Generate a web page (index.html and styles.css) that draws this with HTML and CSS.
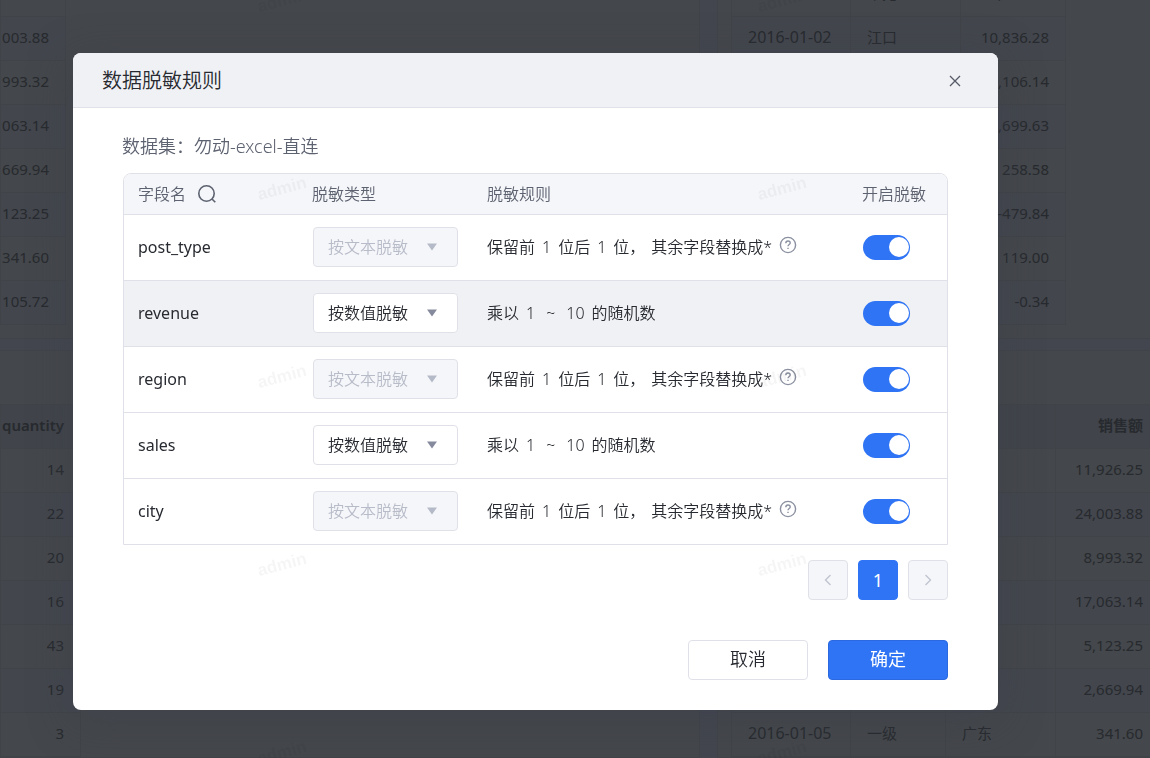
FILE: index.html
```html
<!DOCTYPE html>
<html lang="zh-CN">
<head>
<meta charset="utf-8">
<title>数据脱敏规则</title>
<link rel="stylesheet" href="styles.css">
</head>
<body>
<svg class="sprite" aria-hidden="true">
  <symbol id="help" viewBox="0 0 18 18"><circle cx="9" cy="9" r="7.6" fill="none" stroke="currentColor" stroke-width="1.4"/><path d="M6.8 7.200c0-1.300 1-2.200 2.200-2.200s2.200.8 2.200 2c0 1.500-2.200 1.600-2.200 3.300M9 11.800v1.300" fill="none" stroke="currentColor" stroke-width="1.4"/></symbol>
  <symbol id="caret" viewBox="0 0 10 8"><path d="M0 .5h10L5 7.500z" fill="currentColor"/></symbol>
</svg>

<main class="dashboard">
  <section class="panel panel-top">
    <table class="grid grid-edge">
      <tbody>
        <tr><td></td></tr>
        <tr><td>003.88</td></tr>
        <tr><td>993.32</td></tr>
        <tr><td>063.14</td></tr>
        <tr><td>669.94</td></tr>
        <tr><td>123.25</td></tr>
        <tr><td>341.60</td></tr>
        <tr><td>105.72</td></tr>
      </tbody>
    </table>
  </section>
  <section class="panel panel-top panel-right">
    <table class="grid grid-upper">
      <colgroup><col class="c-date"><col class="c-city"><col></colgroup>
      <tbody>
        <tr><td></td><td class="txt">常宛</td><td>,836.28</td></tr>
        <tr><td class="date">2016-01-02</td><td class="txt">江口</td><td>10,836.28</td></tr>
        <tr><td></td><td></td><td>,106.14</td></tr>
        <tr><td></td><td></td><td>,699.63</td></tr>
        <tr><td></td><td></td><td>258.58</td></tr>
        <tr><td></td><td></td><td>-479.84</td></tr>
        <tr><td></td><td></td><td>119.00</td></tr>
        <tr><td></td><td></td><td>-0.34</td></tr>
      </tbody>
    </table>
  </section>
  <section class="panel panel-bottom">
    <table class="grid grid-quantity">
      <thead><tr><th>quantity</th></tr></thead>
      <tbody>
        <tr><td>14</td></tr>
        <tr><td>22</td></tr>
        <tr><td>20</td></tr>
        <tr><td>16</td></tr>
        <tr><td>43</td></tr>
        <tr><td>19</td></tr>
        <tr><td>3</td></tr>
      </tbody>
    </table>
  </section>
  <section class="panel panel-bottom panel-right">
    <table class="grid grid-sales">
      <colgroup><col class="c-date"><col class="c-level"><col class="c-area"><col></colgroup>
      <thead><tr><th></th><th></th><th></th><th>销售额</th></tr></thead>
      <tbody>
        <tr><td></td><td></td><td></td><td>11,926.25</td></tr>
        <tr><td></td><td></td><td></td><td>24,003.88</td></tr>
        <tr><td></td><td></td><td></td><td>8,993.32</td></tr>
        <tr><td></td><td></td><td></td><td>17,063.14</td></tr>
        <tr><td></td><td></td><td></td><td>5,123.25</td></tr>
        <tr><td></td><td></td><td></td><td>2,669.94</td></tr>
        <tr><td class="date">2016-01-05</td><td class="txt">一级</td><td class="txt">广东</td><td>341.60</td></tr>
      </tbody>
    </table>
  </section>
</main>

<div class="overlay">
  <div class="dialog" role="dialog" aria-modal="true" aria-labelledby="dialog-title">
    <header class="dialog-header">
      <h1 class="dialog-title" id="dialog-title">数据脱敏规则</h1>
      <button class="close" type="button" aria-label="关闭"><svg width="12" height="12" viewBox="0 0 12 12"><path d="M1 1l10 10M11 1L1 11" stroke="currentColor" stroke-width="1.3"/></svg></button>
    </header>
    <div class="dialog-body">
      <p class="dataset">数据集：勿动-excel-直连</p>
      <div class="rules-frame">
        <table class="rules">
          <colgroup><col class="r-name"><col class="r-type"><col><col class="r-switch"></colgroup>
          <thead>
            <tr>
              <th><div class="name-head">字段名 <button class="search" type="button" aria-label="搜索"><svg width="20" height="20" viewBox="0 0 20 20" fill="none" stroke="currentColor" stroke-width="1.6"><circle cx="9.500" cy="9.500" r="7.700"/><path d="M15 15l3.300 3.300"/></svg></button></div></th>
              <th>脱敏类型</th><th>脱敏规则</th><th>开启脱敏</th>
            </tr>
          </thead>
          <tbody>
            <tr>
              <td>post_type</td>
              <td><div class="select"><select aria-label="post_type 脱敏类型" disabled><option>按文本脱敏</option></select><svg class="caret"><use href="#caret"/></svg></div></td>
              <td><div class="rule">保留前<span class="num">1</span>位后<span class="num">1</span>位，<span class="rest">其余字段替换成*</span><svg class="help"><use href="#help"/></svg></div></td>
              <td><input class="switch" type="checkbox" role="switch" aria-label="post_type 开启脱敏" checked></td>
            </tr>
            <tr class="active">
              <td>revenue</td>
              <td><div class="select"><select aria-label="revenue 脱敏类型"><option>按数值脱敏</option></select><svg class="caret"><use href="#caret"/></svg></div></td>
              <td><div class="rule">乘以<span class="num">1</span><span class="tilde">~</span><span class="num">10</span>的随机数</div></td>
              <td><input class="switch" type="checkbox" role="switch" aria-label="revenue 开启脱敏" checked></td>
            </tr>
            <tr>
              <td>region</td>
              <td><div class="select"><select aria-label="region 脱敏类型" disabled><option>按文本脱敏</option></select><svg class="caret"><use href="#caret"/></svg></div></td>
              <td><div class="rule">保留前<span class="num">1</span>位后<span class="num">1</span>位，<span class="rest">其余字段替换成*</span><svg class="help"><use href="#help"/></svg></div></td>
              <td><input class="switch" type="checkbox" role="switch" aria-label="region 开启脱敏" checked></td>
            </tr>
            <tr>
              <td>sales</td>
              <td><div class="select"><select aria-label="sales 脱敏类型"><option>按数值脱敏</option></select><svg class="caret"><use href="#caret"/></svg></div></td>
              <td><div class="rule">乘以<span class="num">1</span><span class="tilde">~</span><span class="num">10</span>的随机数</div></td>
              <td><input class="switch" type="checkbox" role="switch" aria-label="sales 开启脱敏" checked></td>
            </tr>
            <tr>
              <td>city</td>
              <td><div class="select"><select aria-label="city 脱敏类型" disabled><option>按文本脱敏</option></select><svg class="caret"><use href="#caret"/></svg></div></td>
              <td><div class="rule">保留前<span class="num">1</span>位后<span class="num">1</span>位，<span class="rest">其余字段替换成*</span><svg class="help"><use href="#help"/></svg></div></td>
              <td><input class="switch" type="checkbox" role="switch" aria-label="city 开启脱敏" checked></td>
            </tr>
          </tbody>
        </table>
      </div>
      <nav class="pager" aria-label="分页">
        <button class="page" type="button" aria-label="上一页" disabled><svg width="8" height="12" viewBox="0 0 8 12"><path d="M6.500 1L1.500 6l5 5" fill="none" stroke="currentColor" stroke-width="1.300"/></svg></button>
        <button class="page page-current" type="button" aria-current="page">1</button>
        <button class="page" type="button" aria-label="下一页" disabled><svg width="8" height="12" viewBox="0 0 8 12"><path d="M1.500 1l5 5-5 5" fill="none" stroke="currentColor" stroke-width="1.300"/></svg></button>
      </nav>
    </div>
    <footer class="dialog-footer">
      <button class="btn" type="button">取消</button>
      <button class="btn btn-primary" type="button">确定</button>
    </footer>
  </div>
</div>

<div class="watermarks" aria-hidden="true">
  <span>admin</span><span>admin</span>
  <span>admin</span><span>admin</span>
  <span>admin</span><span>admin</span>
  <span>admin</span><span>admin</span>
  <span>admin</span><span>admin</span>
</div>
</body>
</html>
```
FILE: styles.css
```css
* { box-sizing: border-box; }

body {
  margin: 0;
  height: 100vh;
  overflow: hidden;
  font: 16px/24px "Noto Sans", "Noto Sans CJK SC", sans-serif;
  color: #272a30;
  background: #44464a;
}

button, select {
  font: inherit;
  color: inherit;
  margin: 0;
  padding: 0;
}

.sprite { display: none; }

/* Dimmed dashboard */
.dashboard {
  display: grid;
  grid-template-columns: minmax(0, 699fr) minmax(0, 432fr);
  grid-template-rows: 338px 406px;
  gap: 13px 19px;
  height: 100%;
  background: #43464e;
  color: #272a2e;
}
.panel {
  background: #44474b;
  display: flex;
  flex-direction: column;
  overflow: hidden;
  box-shadow: 0 0 0 1px #404348;
}
.panel-top { justify-content: flex-end; padding-bottom: 13px; }
.panel-bottom { padding-top: 53px; }
.panel-right { padding-left: 13px; }
.grid {
  flex: none;
  border-collapse: collapse;
  table-layout: fixed;
  font-size: 15px;
  line-height: 24px;
}
.grid th, .grid td {
  height: 44px;
  padding: 0 16px 4px;
  border: 1px solid #404347;
  text-align: right;
  white-space: nowrap;
}
.grid th { background: #41444a; font-weight: 600; }
.grid-edge tr:nth-child(even) td,
.grid-upper tr:nth-child(even) td,
.panel-bottom tbody tr:nth-child(even) td { background: #43464d; }
.grid .txt { text-align: left; }
.grid .date { font-size: 16px; text-align: left; }
.grid-edge { width: 66px; }
.grid-edge td { padding-left: 0; }
.grid-quantity { width: 81px; }
.grid-quantity th { padding-left: 0; }
.grid-upper { width: 335px; }
.grid-sales { width: 429px; }
.c-date { width: 119px; }
.c-city { width: 110px; }
.c-level { width: 95px; }
.c-area { width: 110px; }

/* Dialog */
.overlay {
  position: fixed;
  inset: 0;
  padding: 53px 152px 48px 73px;
}
.dialog {
  display: flex;
  flex-direction: column;
  background: #fff;
  border-radius: 8px;
  overflow: hidden;
  box-shadow: 0 8px 40px rgba(60, 63, 75, .5);
}
.dialog-header {
  display: flex;
  align-items: center;
  justify-content: space-between;
  height: 55px;
  padding: 2px 32px 0 29px;
  background: #f0f1f5;
  border-bottom: 1px solid #e0e1e8;
}
.dialog-title { margin: 0; font-size: 20px; font-weight: 350; line-height: 28px; }
.close {
  display: grid;
  place-items: center;
  width: 22px;
  height: 22px;
  border: 0;
  background: none;
  color: #555a66;
}
.dialog-body { padding: 22px 50px 0 49px; }
.dataset {
  margin: 0 0 11px;
  font-size: 18px;
  line-height: 32px;
  color: #5d6270;
  font-weight: 350;
}
.rules-frame {
  margin-left: 1px;
  border: 1px solid #e0e1e8;
  border-radius: 8px 8px 0 0;
  overflow: hidden;
}
.rules {
  width: 100%;
  border-collapse: collapse;
  table-layout: fixed;
}
.rules th {
  height: 40px;
  padding: 0 0 0 14px;
  background: #f5f6f9;
  text-align: left;
  font-weight: 350;
  color: #5d6270;
}
.rules td { height: 66px; padding: 0 0 0 14px; border-top: 1px solid #e0e1e8; }
.active td { background: #f0f1f5; }
.r-name { width: 174px; }
.r-type { width: 175px; }
.r-switch { width: 99px; }
.name-head { display: flex; align-items: center; gap: 11px; }
.search { display: flex; border: 0; background: none; }

.select { position: relative; width: 145px; margin-left: 1px; }
.select select {
  display: block;
  width: 100%;
  height: 40px;
  padding: 0 14px;
  border: 1px solid #e0e1e8;
  border-radius: 4px;
  background: #fff;
  appearance: none;
  font-weight: 350;
  opacity: 1;
}
.select select:disabled { background: #f5f6f9; color: #b8bcc9; }
.caret {
  position: absolute;
  top: 16px;
  right: 21px;
  width: 10px;
  height: 8px;
  color: #858b9c;
  pointer-events: none;
}
.select select:disabled + .caret { color: #b5bac8; }

.rule { display: flex; align-items: center; font-weight: 350; white-space: nowrap; }
.num { margin: 0 7px; }
.tilde { margin: 0 4px; }
.rest { margin-left: 6px; }
.help { width: 18px; height: 18px; margin: 0 0 4px 7px; color: #8b91a0; }

.switch {
  appearance: none;
  display: flex;
  align-items: center;
  justify-content: flex-end;
  width: 47px;
  height: 25px;
  margin: 0 0 0 1px;
  padding: 0 1px;
  border-radius: 13px;
  background: #2f74f4;
}
.switch::before {
  content: "";
  width: 20px;
  height: 20px;
  border-radius: 50%;
  background: #fff;
}

.pager { display: flex; justify-content: flex-end; gap: 10px; margin-top: 15px; }
.page {
  display: grid;
  place-items: center;
  width: 40px;
  height: 40px;
  border: 1px solid #e0e1e8;
  border-radius: 4px;
  background: #f5f6f9;
  color: #bfc3cf;
}
.page-current { border-color: #2f74f4; background: #2f74f4; color: #fff; font-size: 18px; }

.dialog-footer { display: flex; justify-content: flex-end; gap: 20px; padding: 40px 50px 30px; }
.btn {
  width: 120px;
  height: 40px;
  padding-bottom: 2px;
  border: 1px solid #e0e1e8;
  border-radius: 4px;
  background: #fff;
  font-size: 18px;
  font-weight: 350;
}
.btn-primary { border-color: #2b69e0; background: #2f74f4; color: #fff; font-weight: 400; }

/* Repeated user-name watermark */
.watermarks {
  position: fixed;
  inset: 0;
  display: grid;
  grid-template-columns: 500px 500px;
  grid-auto-rows: 188px;
  padding-left: 32px;
  margin-top: -93px;
  overflow: hidden;
  pointer-events: none;
  font: 700 17px/20px "Liberation Sans", Arial, sans-serif;
  color: rgba(0, 0, 0, .04);
}
.watermarks span { place-self: center; transform: rotate(-15deg); }
```
